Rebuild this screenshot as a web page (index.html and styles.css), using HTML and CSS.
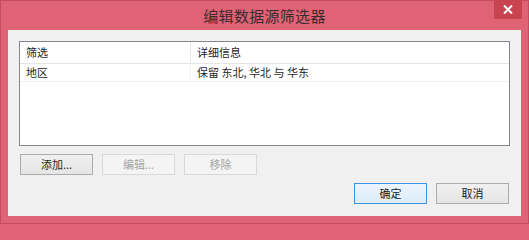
FILE: index.html
```html
<!DOCTYPE html>
<html lang="zh-CN">
<head>
<meta charset="utf-8">
<title>编辑数据源筛选器</title>
<link rel="stylesheet" href="styles.css">
</head>
<body>
<div class="window">
  <div class="titlebar">
    <div class="spacer"></div>
    <div class="title">编辑数据源筛选器</div>
    <div class="tb-right">
      <div class="close">
        <svg width="10" height="9" viewBox="0 0 10 9"><path d="M1 0.5 L9 8.5 M9 0.5 L1 8.5" stroke="#fff" stroke-width="2"/></svg>
      </div>
    </div>
  </div>
  <div class="client">
    <div class="listview">
      <div class="lv-row lv-header">
        <div class="c1">筛选</div>
        <div class="c2">详细信息</div>
      </div>
      <div class="lv-row lv-item">
        <div class="c1">地区</div>
        <div class="c2">保留 东北, 华北 与 华东</div>
      </div>
    </div>
    <div class="btn-row">
      <div class="btn">添加...</div>
      <div class="btn disabled">编辑...</div>
      <div class="btn disabled">移除</div>
    </div>
    <div class="btn-row end">
      <div class="btn default">确定</div>
      <div class="btn">取消</div>
    </div>
  </div>
</div>
</body>
</html>
```
FILE: styles.css
```css
html, body {
  margin: 0;
  padding: 0;
  overflow: hidden;
  background: #df6275;
}
body {
  font-family: "Noto Sans CJK SC", "Noto Sans", sans-serif;
  font-size: 11px;
  color: #1e1e1e;
}
.window {
  width: 529px;
  height: 224px;
  box-sizing: border-box;
  background: #df6275;
  border: 1px solid #c24e60;
  display: flex;
  flex-direction: column;
}
.titlebar {
  height: 29px;
  display: grid;
  grid-template-columns: 1fr auto 1fr;
}
.title {
  font-size: 15px;
  line-height: 29px;
  color: #3b2a2e;
  letter-spacing: 0.3px;
}
.tb-right {
  display: flex;
  justify-content: flex-end;
  align-items: flex-start;
  padding-right: 6px;
}
.close {
  width: 28px;
  height: 19px;
  margin-top: -1px;
  background: #c8444f;
  display: flex;
  align-items: center;
  justify-content: center;
}
.client {
  flex: 1;
  margin: 0 7px 7px 7px;
  background: #f0f0f0;
  padding: 11px 11px 11px 11px;
  display: flex;
  flex-direction: column;
}
.listview {
  height: 105px;
  box-sizing: border-box;
  border: 1px solid #828790;
  background: #fff;
}
.lv-row {
  display: flex;
}
.lv-header {
  height: 21px;
  border-bottom: 1px solid #e5e5e5;
  line-height: 21px;
}
.lv-header .c1 {
  border-right: 1px solid #e5e5e5;
}
.lv-item {
  height: 17px;
  line-height: 17px;
  border-bottom: 1px solid #f0f0f0;
}
.lv-item .c1 {
  border-right: 1px solid #f3f3f3;
}
.c1 {
  width: 164px;
  padding-left: 6px;
}
.c2 {
  padding-left: 6px;
}
.btn-row {
  display: flex;
  gap: 9px;
  margin-top: 8px;
  padding-left: 1px;
}
.btn-row.end {
  justify-content: flex-end;
  padding-left: 0;
  padding-right: 1px;
}
.btn {
  width: 73px;
  height: 21px;
  box-sizing: border-box;
  border: 1px solid #acacac;
  background: linear-gradient(#f0f0f0, #e5e5e5);
  text-align: center;
  line-height: 19px;
  color: #1e1e1e;
}
.btn.disabled {
  border-color: #d9d9d9;
  background: #f4f4f4;
  color: #a3a3a3;
}
.btn.default {
  border-color: #3c95e0;
  background: linear-gradient(#ecf4fc, #dcecfc);
}
```
